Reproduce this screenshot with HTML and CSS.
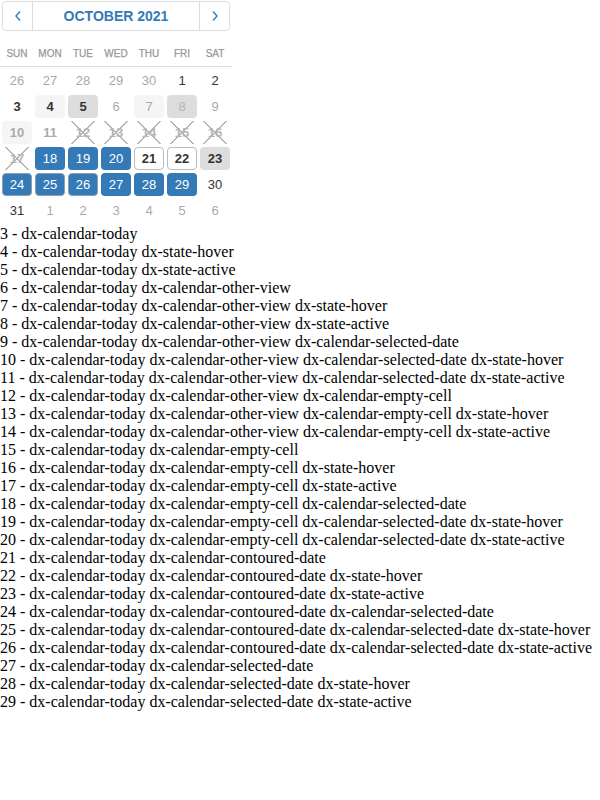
FILE: index.html
```html
<!DOCTYPE html>
<html>
<head>
<meta charset="utf-8">
<link rel="stylesheet" href="styles.css">
</head>
<body>
<div class="calendar">
  <div class="nav">
    <div class="nav-btn"><svg width="10" height="12" viewBox="0 0 10 12"><path d="M7 1.5 L3 6 L7 10.5" fill="none" stroke="#337ab7" stroke-width="1.4"/></svg></div>
    <div class="nav-title">OCTOBER 2021</div>
    <div class="nav-btn nav-right"><svg width="10" height="12" viewBox="0 0 10 12"><path d="M3 1.5 L7 6 L3 10.5" fill="none" stroke="#337ab7" stroke-width="1.4"/></svg></div>
  </div>
  <div class="weekdays">
    <div>SUN</div><div>MON</div><div>TUE</div><div>WED</div><div>THU</div><div>FRI</div><div>SAT</div>
  </div>
  <div class="days">
    <div class="d other">26</div><div class="d other">27</div><div class="d other">28</div><div class="d other">29</div><div class="d other">30</div><div class="d">1</div><div class="d">2</div>
    <div class="d b">3</div><div class="d b hover">4</div><div class="d b active">5</div><div class="d other">6</div><div class="d other hover">7</div><div class="d other active light">8</div><div class="d other">9</div>
    <div class="d other b hover">10</div><div class="d other b">11</div><div class="d other b x">12</div><div class="d other b x">13</div><div class="d other b x">14</div><div class="d other b x">15</div><div class="d other b x">16</div>
    <div class="d other b x">17</div><div class="d sel">18</div><div class="d sel">19</div><div class="d sel">20</div><div class="d b cont">21</div><div class="d b cont">22</div><div class="d b active">23</div>
    <div class="d sel cont-sel">24</div><div class="d sel cont-sel">25</div><div class="d sel cont-sel">26</div><div class="d sel">27</div><div class="d sel">28</div><div class="d sel">29</div><div class="d">30</div>
    <div class="d">31</div><div class="d other">1</div><div class="d other">2</div><div class="d other">3</div><div class="d other">4</div><div class="d other">5</div><div class="d other">6</div>
  </div>
</div>
<div class="list">
<div>3 - dx-calendar-today</div>
<div>4 - dx-calendar-today dx-state-hover</div>
<div>5 - dx-calendar-today dx-state-active</div>
<div>6 - dx-calendar-today dx-calendar-other-view</div>
<div>7 - dx-calendar-today dx-calendar-other-view dx-state-hover</div>
<div>8 - dx-calendar-today dx-calendar-other-view dx-state-active</div>
<div>9 - dx-calendar-today dx-calendar-other-view dx-calendar-selected-date</div>
<div>10 - dx-calendar-today dx-calendar-other-view dx-calendar-selected-date dx-state-hover</div>
<div>11 - dx-calendar-today dx-calendar-other-view dx-calendar-selected-date dx-state-active</div>
<div>12 - dx-calendar-today dx-calendar-other-view dx-calendar-empty-cell</div>
<div>13 - dx-calendar-today dx-calendar-other-view dx-calendar-empty-cell dx-state-hover</div>
<div>14 - dx-calendar-today dx-calendar-other-view dx-calendar-empty-cell dx-state-active</div>
<div>15 - dx-calendar-today dx-calendar-empty-cell</div>
<div>16 - dx-calendar-today dx-calendar-empty-cell dx-state-hover</div>
<div>17 - dx-calendar-today dx-calendar-empty-cell dx-state-active</div>
<div>18 - dx-calendar-today dx-calendar-empty-cell dx-calendar-selected-date</div>
<div>19 - dx-calendar-today dx-calendar-empty-cell dx-calendar-selected-date dx-state-hover</div>
<div>20 - dx-calendar-today dx-calendar-empty-cell dx-calendar-selected-date dx-state-active</div>
<div>21 - dx-calendar-today dx-calendar-contoured-date</div>
<div>22 - dx-calendar-today dx-calendar-contoured-date dx-state-hover</div>
<div>23 - dx-calendar-today dx-calendar-contoured-date dx-state-active</div>
<div>24 - dx-calendar-today dx-calendar-contoured-date dx-calendar-selected-date</div>
<div>25 - dx-calendar-today dx-calendar-contoured-date dx-calendar-selected-date dx-state-hover</div>
<div>26 - dx-calendar-today dx-calendar-contoured-date dx-calendar-selected-date dx-state-active</div>
<div>27 - dx-calendar-today dx-calendar-selected-date</div>
<div>28 - dx-calendar-today dx-calendar-selected-date dx-state-hover</div>
<div>29 - dx-calendar-today dx-calendar-selected-date dx-state-active</div>
</div>
</body>
</html>
```
FILE: styles.css
```css
body {
  margin: 0;
  font-family: "Liberation Serif", serif;
  font-size: 16px;
  color: #000;
}
.calendar {
  width: 232px;
  font-family: "Liberation Sans", Arial, sans-serif;
}
.nav {
  margin: 1px 2px 0 2px;
  height: 28px;
  border: 1px solid #ddd;
  border-radius: 4px;
  display: flex;
  align-items: stretch;
}
.nav-btn {
  width: 29px;
  border-right: 1px solid #ddd;
  display: flex;
  align-items: center;
  justify-content: center;
}
.nav-right {
  border-right: none;
  border-left: 1px solid #ddd;
}
.nav-title {
  flex: 1;
  display: flex;
  align-items: center;
  justify-content: center;
  color: #337ab7;
  font-weight: bold;
  font-size: 14px;
}
.weekdays {
  margin-top: 10px;
  height: 25px;
  display: grid;
  grid-template-columns: repeat(7, 30px);
  column-gap: 3px;
  padding-left: 2px;
  border-bottom: 1px solid #ddd;
  font-size: 10px;
  color: #999;
  -webkit-text-stroke: 0.25px #999;
  align-items: center;
  text-align: center;
}
.days {
  margin-top: 2px;
  padding-left: 2px;
  display: grid;
  grid-template-columns: repeat(7, 30px);
  grid-auto-rows: 23px;
  column-gap: 3px;
  row-gap: 3px;
}
.d {
  box-sizing: border-box;
  display: flex;
  align-items: center;
  justify-content: center;
  font-size: 13px;
  color: #333;
  border-radius: 4px;
}
.b { font-weight: bold; }
.other { color: #aaa; }
.hover { background: #f5f5f5; }
.active { background: #ddd; }
.light { color: #b5b5b5; }
.x {
  color: #b5b5b5;
  background:
    linear-gradient(to top right, transparent calc(50% - 0.6px), #b5b5b5 calc(50% - 0.6px), #b5b5b5 calc(50% + 0.6px), transparent calc(50% + 0.6px)),
    linear-gradient(to bottom right, transparent calc(50% - 0.6px), #b5b5b5 calc(50% - 0.6px), #b5b5b5 calc(50% + 0.6px), transparent calc(50% + 0.6px));
  background-size: 24px 24px;
  background-position: center;
  background-repeat: no-repeat;
}
.sel {
  background: #337ab7;
  color: #fff;
}
.cont {
  border: 1px solid #bbb;
}
.cont-sel {
  border: 1px solid #8f9fb1;
}
.list {
  margin-top: 3px;
  line-height: 18px;
}
```
